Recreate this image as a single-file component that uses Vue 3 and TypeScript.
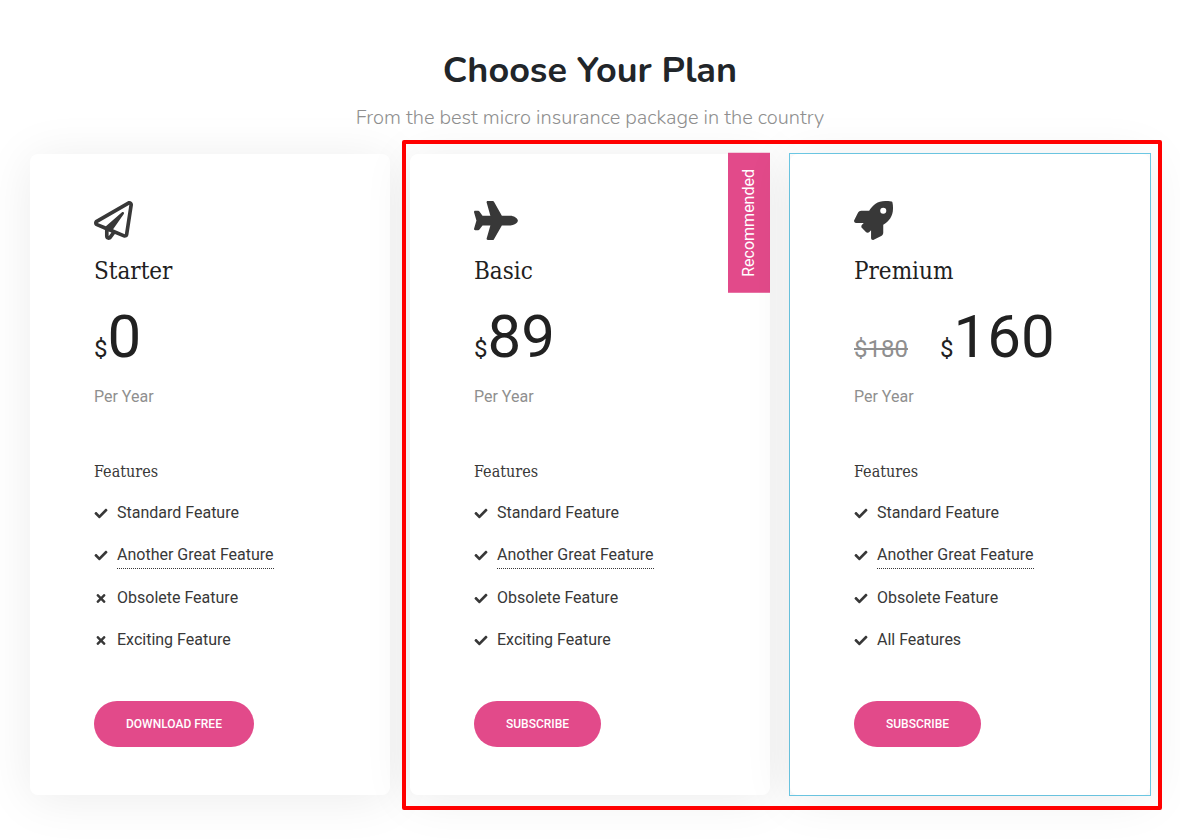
<script setup lang="ts">
type IconName = 'paperPlane' | 'plane' | 'rocket'

interface Feature {
  label: string
  included: boolean
  hint?: boolean
}

interface Plan {
  name: string
  icon: IconName
  price: string
  oldPrice?: string
  action: string
  badge?: string
  selected?: boolean
  features: Feature[]
}

const icons: Record<IconName, { width: number; path: string }> = {
  paperPlane: {
    width: 512,
    path: 'M440 6.5L24 246.4c-34.4 19.9-31.1 70.8 5.7 85.9L144 379.6V464c0 46.4 59.2 65.5 86.6 28.6l43.8-59.1 111.9 46.2c5.9 2.4 12.1 3.6 18.3 3.6 8.2 0 16.3-2.1 23.6-6.2 12.8-7.2 21.6-20 23.9-34.5l59.4-387.2c6.1-40.1-36.9-68.8-71.5-48.9zM192 464v-64.6l36.6 15.1L192 464zm212.6-28.7l-153.8-63.5L391 169.5c10.7-15.5-9.5-33.5-23.7-21.2L155.8 332.6 48 288 464 48l-59.4 387.3z',
  },
  plane: {
    width: 576,
    path: 'M480 192H365.71L260.61 8.06A16.014 16.014 0 0 0 246.71 0h-65.5c-10.63 0-18.3 10.17-15.38 20.39L214.86 192H112l-43.2-57.6c-3.02-4.03-7.77-6.4-12.8-6.4H16.01C5.6 128-2.04 137.78.49 147.88L32 256 .49 364.12C-2.04 374.22 5.6 384 16.01 384H56c5.04 0 9.78-2.37 12.8-6.4L112 320h102.86l-49.03 171.6c-2.92 10.22 4.75 20.4 15.38 20.4h65.5c5.74 0 11.04-3.08 13.89-8.06L365.71 320H480c35.35 0 96-28.65 96-64s-60.65-64-96-64z',
  },
  rocket: {
    width: 512,
    path: 'M505.12 19.09c-1.19-5.53-6.66-11-12.21-12.19C460.72 0 435.51 0 410.41 0 307.18 0 245.27 55.2 199.05 128H94.84c-16.35.02-35.56 11.88-42.89 26.48L2.52 253.3A28.4 28.4 0 0 0 0 264a24 24 0 0 0 24 24h103.82l-22.48 22.47c-11.36 11.36-12.99 32.26 0 45.25l50.9 50.9c11.16 11.19 32.16 13.16 45.28 0L224 384.16V488a24 24 0 0 0 24 24 28.56 28.56 0 0 0 10.71-2.52l98.73-49.39c14.63-7.29 26.51-26.5 26.51-42.86V312.8C456.55 266.48 512 204.39 512 101.7c.08-25.2.08-50.4-6.88-82.61zM384.04 168a40 40 0 1 1 40-40 40 40 0 0 1-40 40z',
  },
}

const checkPath =
  'M173.898 439.404l-166.4-166.4c-9.997-9.997-9.997-26.206 0-36.204l36.203-36.204c9.997-9.998 26.207-9.998 36.204 0L192 312.69 432.095 72.596c9.997-9.997 26.207-9.997 36.204 0l36.203 36.204c9.997 9.997 9.997 26.206 0 36.204l-294.4 294.401c-9.998 9.997-26.207 9.997-36.204-.001z'
const crossPath =
  'M322.72 256l100.07-100.07c12.28-12.28 12.28-32.19 0-44.48l-22.24-22.24c-12.28-12.28-32.19-12.28-44.48 0L256 189.28 155.93 89.21c-12.28-12.28-32.19-12.28-44.48 0L89.21 111.45c-12.28 12.28-12.28 32.19 0 44.48L189.28 256 89.21 356.07c-12.28 12.28-12.28 32.19 0 44.48l22.24 22.24c12.28 12.28 32.2 12.28 44.48 0L256 322.72l100.07 100.07c12.28 12.28 32.2 12.28 44.48 0l22.24-22.24c12.28-12.28 12.28-32.19 0-44.48L322.72 256z'

const plans: Plan[] = [
  {
    name: 'Starter',
    icon: 'paperPlane',
    price: '0',
    action: 'Download Free',
    features: [
      { label: 'Standard Feature', included: true },
      { label: 'Another Great Feature', included: true, hint: true },
      { label: 'Obsolete Feature', included: false },
      { label: 'Exciting Feature', included: false },
    ],
  },
  {
    name: 'Basic',
    icon: 'plane',
    price: '89',
    action: 'Subscribe',
    badge: 'Recommended',
    features: [
      { label: 'Standard Feature', included: true },
      { label: 'Another Great Feature', included: true, hint: true },
      { label: 'Obsolete Feature', included: true },
      { label: 'Exciting Feature', included: true },
    ],
  },
  {
    name: 'Premium',
    icon: 'rocket',
    price: '160',
    oldPrice: '$180',
    action: 'Subscribe',
    selected: true,
    features: [
      { label: 'Standard Feature', included: true },
      { label: 'Another Great Feature', included: true, hint: true },
      { label: 'Obsolete Feature', included: true },
      { label: 'All Features', included: true },
    ],
  },
]
</script>

<template>
  <main class="pricing">
    <header class="intro">
      <h1>Choose Your Plan</h1>
      <p>From the best micro insurance package in the country</p>
    </header>

    <section class="plans" aria-label="Plans">
      <div v-for="plan in plans" :key="plan.name" class="column" :class="{ selected: plan.selected }">
        <article class="card">
          <span v-if="plan.badge" class="badge">{{ plan.badge }}</span>
          <svg
            class="plan-icon"
            :viewBox="`0 0 ${icons[plan.icon].width} 512`"
            aria-hidden="true"
          >
            <path :d="icons[plan.icon].path" />
          </svg>
          <h2>{{ plan.name }}</h2>
          <p class="price">
            <s v-if="plan.oldPrice">{{ plan.oldPrice }}</s>
            <span class="currency">$</span><span class="amount">{{ plan.price }}</span>
          </p>
          <p class="period">Per Year</p>

          <h3>Features</h3>
          <ul>
            <li v-for="feature in plan.features" :key="feature.label">
              <svg class="mark" viewBox="0 0 512 512" aria-hidden="true">
                <path :d="feature.included ? checkPath : crossPath" />
              </svg>
              <span :class="{ hint: feature.hint }">{{ feature.label }}</span>
            </li>
          </ul>
          <button type="button">{{ plan.action }}</button>
        </article>
      </div>
      <div class="highlight" aria-hidden="true"></div>
    </section>
  </main>
</template>

<style>
body {
  margin: 0;
  background: #fff;
}
</style>

<style scoped>
.pricing {
  box-sizing: border-box;
  padding: 47px 30px 44px;
  overflow: hidden;
  color: #212529;
  font-family: Roboto, "Liberation Sans", sans-serif;
  font-size: 16px;
  line-height: 24px;
}

h1,
h2,
h3,
p,
ul {
  margin: 0;
  padding: 0;
  font-weight: 400;
}

.intro {
  margin-bottom: 20px;
  text-align: center;
  font-family: Nunito, Lato, "Open Sans", sans-serif;
}

.intro h1 {
  font-size: 36px;
  font-weight: 700;
  line-height: 48px;
}

.intro p {
  margin-top: 7px;
  color: #8f8f8f;
  font-size: 20px;
  font-weight: 300;
  line-height: 32px;
}

.plans {
  display: grid;
  grid-template-columns: repeat(3, minmax(0, 1fr));
  column-gap: 20px;
}

.column {
  display: grid;
  grid-row: 1;
}

.column:nth-child(1) {
  grid-column: 1;
}

.column:nth-child(2) {
  grid-column: 2;
}

.column:nth-child(3) {
  grid-column: 3;
}

.selected {
  outline: 1px solid #6ecbe8;
}

.card {
  position: relative;
  display: flex;
  flex-direction: column;
  align-items: flex-start;
  padding: 47px 64px 48px;
  border-radius: 8px;
  background: #fff;
  box-shadow: 0 4px 50px rgba(0, 0, 0, 0.08);
}

.badge {
  position: absolute;
  top: -1px;
  right: 0;
  box-sizing: border-box;
  width: 42px;
  padding: 16px 0;
  background: #e24a8a;
  color: #fff;
  line-height: 42px;
  writing-mode: vertical-rl;
  transform: rotate(180deg);
}

.plan-icon {
  height: 39px;
  fill: #383838;
}

h2 {
  margin-top: 15px;
  color: #212121;
  font-family: "Roboto Slab", "DejaVu Serif Condensed", "DejaVu Serif", serif;
  font-size: 24px;
  line-height: 32px;
}

.price {
  display: flex;
  align-items: baseline;
  margin-top: 20px;
  color: #212121;
  font-size: 24px;
  line-height: 60px;
}

.price s {
  margin-right: 32px;
  color: #8f8f8f;
}

.amount {
  font-size: 60px;
}

.period {
  margin-top: 6px;
  color: #8f8f8f;
}

h3 {
  margin-top: 51px;
  color: #383838;
  font-family: "Roboto Slab", "DejaVu Serif Condensed", "DejaVu Serif", serif;
  font-size: 16px;
}

ul {
  display: flex;
  flex-direction: column;
  gap: 18px;
  margin-top: 17px;
  color: #383838;
  list-style: none;
}

li {
  display: flex;
  align-items: flex-start;
  gap: 9px;
}

.mark {
  flex: none;
  width: 14px;
  height: 13px;
  margin-top: 6px;
  fill: #383838;
}

.hint {
  margin-bottom: -1px;
  padding-bottom: 1px;
  border-bottom: 1px dotted #383838;
}

button {
  margin-top: 49px;
  padding: 11px 32px;
  border: 0;
  border-radius: 24px;
  background: #e24a8a;
  color: #fff;
  font-family: inherit;
  font-size: 12px;
  font-weight: 500;
  line-height: 24px;
  text-transform: uppercase;
  cursor: pointer;
}

.highlight {
  z-index: 1;
  grid-row: 1;
  grid-column: 2 / 4;
  margin: -14px -12px -15px -8px;
  border: 4px solid #f00;
  border-radius: 2px;
  pointer-events: none;
}
</style>
